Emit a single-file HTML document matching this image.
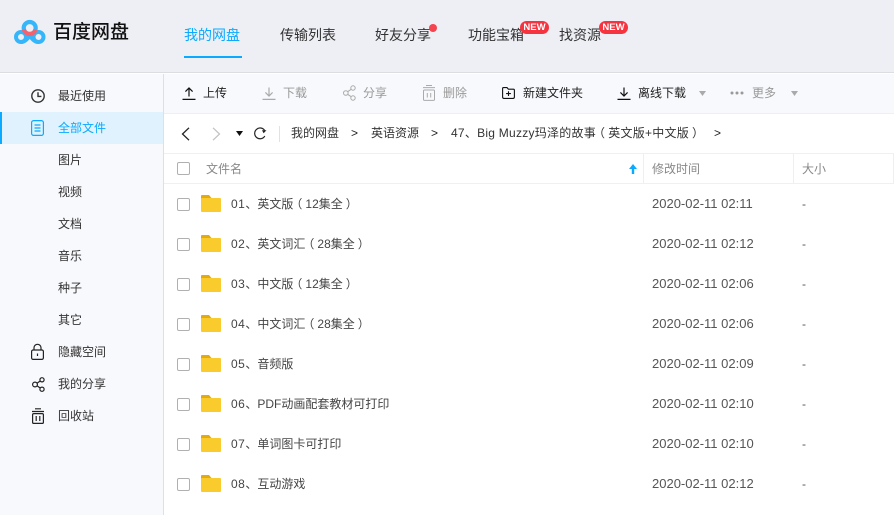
<!DOCTYPE html>
<html lang="zh"><head><meta charset="utf-8"><style>
*{margin:0;padding:0;box-sizing:border-box}
html,body{width:894px;height:515px;overflow:hidden;background:#fff}
body{position:relative;font-family:"Liberation Sans","Noto Sans CJK SC",sans-serif;font-size:12px;color:#424e67}
.t{position:absolute;white-space:nowrap;line-height:16px}
.b{position:absolute}
svg{position:absolute;overflow:visible;fill:none}
.nav{color:#333;top:26px;line-height:18px;font-size:14px}
.side{left:58px;color:#333;margin-top:-1px}
.tool{top:85px;color:#222}
.dis{color:#999}
.cb{position:absolute;left:177px;width:13px;height:13px;border:1px solid #b0b0b0;border-radius:2px;background:#fff}
.name{left:231px;color:#444;margin-top:-1px}
.date{left:652px;color:#555;font-size:13px;margin-top:-1px}
.dash{left:802px;color:#555;margin-top:-1px}
.new{position:absolute;height:13px;width:29px;border-radius:7px;background:#f5343f;color:#fff;font-size:9.5px;font-weight:bold;line-height:13px;text-align:center}
.bc{top:125px;color:#333}
.po{position:relative;left:-3px}
.pc{position:relative;left:3px}
.n{letter-spacing:.5px}
</style></head><body>
<div class="b" style="left:0;top:0;width:894px;height:73px;background:#eeeff4;border-bottom:1px solid #dcdde1"></div>
<div class="b" style="left:0;top:74px;width:164px;height:441px;background:#f8f9fc;border-right:1px solid #dfe0e4"></div>
<div class="b" style="left:164px;top:74px;width:730px;height:40px;background:#f8f9fc;border-bottom:1px solid #eeeff2"></div>

<svg style="left:14px;top:20px" width="32" height="26" viewBox="0 0 32 26">
<circle cx="7" cy="17" r="5" stroke="#35b6fb" stroke-width="4"/>
<circle cx="24.5" cy="17" r="5" stroke="#35b6fb" stroke-width="4"/>
<path d="M7 22C11 22 13 19 15.7 16C18.5 19 20.5 22 24.5 22" stroke="#35b6fb" stroke-width="4"/>
<circle cx="15.7" cy="8" r="6" stroke="#35b6fb" stroke-width="4.2"/>
<path d="M9.9 9.5A6 6 0 0 0 21.5 9.5" stroke="#f4626e" stroke-width="4.2"/>
</svg>
<div class="t" style="left:53px;top:21px;font-size:19px;line-height:24px;color:#111;font-weight:500">百度网盘</div>

<div class="t nav" style="left:184px;color:#09aaff">我的网盘</div>
<div class="b" style="left:184px;top:56px;width:58px;height:2px;background:#09aaff"></div>
<div class="t nav" style="left:280px">传输列表</div>
<div class="t nav" style="left:375px">好友分享</div>
<div class="b" style="left:429px;top:24px;width:8px;height:8px;border-radius:50%;background:#f5434f"></div>
<div class="t nav" style="left:468px">功能宝箱</div>
<div class="new" style="left:520px;top:21px">NEW</div>
<div class="t nav" style="left:559px">找资源</div>
<div class="new" style="left:599px;top:21px">NEW</div>

<div class="b" style="left:0;top:112px;width:163px;height:32px;background:#dff2fd"></div>
<div class="b" style="left:0;top:112px;width:2px;height:32px;background:#09aaff"></div>
<svg style="left:31px;top:89px" width="14" height="14" viewBox="0 0 14 14" stroke="#333" stroke-width="1.4"><circle cx="7" cy="7" r="6.2"/><path d="M7 3.2V7.4H10.4"/></svg>
<div class="t side" style="top:89px">最近使用</div>
<svg style="left:31px;top:120px" width="13" height="16" viewBox="0 0 13 16" stroke="#09aaff" stroke-width="1.2"><rect x=".6" y=".6" width="11.8" height="14.8" rx="2"/><path d="M3.5 5H9.5M3.5 8H9.5M3.5 11H9.5"/></svg>
<div class="t side" style="top:121px;color:#09aaff">全部文件</div>
<div class="t side" style="top:153px">图片</div>
<div class="t side" style="top:185px">视频</div>
<div class="t side" style="top:217px">文档</div>
<div class="t side" style="top:249px">音乐</div>
<div class="t side" style="top:281px">种子</div>
<div class="t side" style="top:313px">其它</div>
<svg style="left:31px;top:344px" width="13" height="16" viewBox="0 0 13 16" stroke="#222" stroke-width="1.2"><rect x=".6" y="6" width="11.8" height="9.4" rx="1.5"/><path d="M3 6V3.6A3.5 3.3 0 0 1 10 3.6V6M6.5 9.5V12"/></svg>
<div class="t side" style="top:345px">隐藏空间</div>
<svg style="left:32px;top:377px" width="13" height="15" viewBox="0 0 13 15" stroke="#222" stroke-width="1.2"><circle cx="3" cy="7.5" r="2.4"/><circle cx="10" cy="2.8" r="2.1"/><circle cx="10" cy="12.2" r="2.1"/><path d="M5 6.2L8.2 4M5 8.8L8.2 11"/></svg>
<div class="t side" style="top:377px">我的分享</div>
<svg style="left:32px;top:408px" width="12" height="16" viewBox="0 0 12 16" stroke="#222" stroke-width="1.2"><path d="M0 3.5H12M3 .8H9"/><rect x=".6" y="5.6" width="10.8" height="9.8" rx="1.2"/><path d="M4.2 8V13M7.8 8V13"/></svg>
<div class="t side" style="top:409px">回收站</div>

<svg style="left:182px;top:87px" width="14" height="13" viewBox="0 0 14 13" stroke="#111" stroke-width="1.2"><path d="M7 9.5V1M3.4 4.6L7 1L10.6 4.6M0.5 12.4H13.5"/></svg>
<div class="t tool" style="left:203px">上传</div>
<svg style="left:262px;top:87px" width="14" height="13" viewBox="0 0 14 13" stroke="#aaa" stroke-width="1.2"><path d="M7 .5V9M3.4 5.4L7 9L10.6 5.4M0.5 12.4H13.5"/></svg>
<div class="t tool dis" style="left:283px">下载</div>
<svg style="left:343px;top:85px" width="13" height="16" viewBox="0 0 13 16" stroke="#aaa" stroke-width="1"><circle cx="2.8" cy="8" r="2.3"/><circle cx="10" cy="3" r="2.2"/><circle cx="10" cy="13" r="2.2"/><path d="M4.8 6.6L8.2 4.3M4.8 9.4L8.2 11.7"/></svg>
<div class="t tool dis" style="left:363px">分享</div>
<svg style="left:423px;top:85px" width="12" height="16" viewBox="0 0 12 16" stroke="#aaa" stroke-width="1"><path d="M0 2.6H12M3 .5H9"/><rect x=".5" y="5" width="11" height="10.4" rx="1"/><path d="M4.3 8V12.5M7.7 8V12.5"/></svg>
<div class="t tool dis" style="left:443px">删除</div>
<svg style="left:502px;top:87px" width="13" height="12" viewBox="0 0 13 12" stroke="#111" stroke-width="1.1"><path d="M.6 10V1.6Q.6.6 1.6.6H5L6.4 2.2H11.4Q12.4 2.2 12.4 3.2V10Q12.4 11.4 11 11.4H2Q.6 11.4.6 10ZM6.5 4.2V9M4.1 6.6H8.9"/></svg>
<div class="t tool" style="left:523px">新建文件夹</div>
<svg style="left:617px;top:87px" width="14" height="13" viewBox="0 0 14 13" stroke="#111" stroke-width="1.2"><path d="M7 .5V9M3.4 5.4L7 9L10.6 5.4M0.5 12.4H13.5"/></svg>
<div class="t tool" style="left:638px">离线下载</div>
<svg style="left:699px;top:91px" width="7" height="5" viewBox="0 0 7 5"><path d="M0 0H7L3.5 5Z" fill="#aaa"/></svg>
<svg style="left:730px;top:91px" width="14" height="4" viewBox="0 0 14 4"><g fill="#999"><circle cx="2" cy="2" r="1.5"/><circle cx="7" cy="2" r="1.5"/><circle cx="12" cy="2" r="1.5"/></g></svg>
<div class="t tool dis" style="left:752px">更多</div>
<svg style="left:791px;top:91px" width="7" height="5" viewBox="0 0 7 5"><path d="M0 0H7L3.5 5Z" fill="#aaa"/></svg>

<svg style="left:181px;top:127px" width="9" height="14" viewBox="0 0 9 14" stroke="#222" stroke-width="1.3"><path d="M8 .8L1.5 7L8 13.2"/></svg>
<svg style="left:212px;top:127px" width="9" height="14" viewBox="0 0 9 14" stroke="#c4c4c4" stroke-width="1.3"><path d="M1 .8L7.5 7L1 13.2"/></svg>
<svg style="left:236px;top:131px" width="7" height="5" viewBox="0 0 7 5"><path d="M0 0H7L3.5 5Z" fill="#111"/></svg>
<svg style="left:253px;top:127px" width="14" height="13" viewBox="0 0 14 13" stroke="#222" stroke-width="1.2"><path d="M11.6 3.4A5.4 5.4 0 1 0 11.8 9"/><path d="M13.5 3.2L10.6 6.2L9 3.2Z" fill="#222" stroke="none"/></svg>
<div class="b" style="left:279px;top:126px;width:1px;height:16px;background:#e2e2e2"></div>
<div class="t bc" style="left:291px">我的网盘</div>
<div class="t bc" style="left:351px;color:#222">&gt;</div>
<div class="t bc" style="left:371px">英语资源</div>
<div class="t bc" style="left:431px;color:#222">&gt;</div>
<div class="t bc" style="left:451px;letter-spacing:.25px">47、Big Muzzy玛泽的故事<span class="po">（</span>英文版+中文版<span class="pc">）</span></div>
<div class="t bc" style="left:714px;color:#222">&gt;</div>

<div class="b" style="left:164px;top:153px;width:730px;height:1px;background:#f0f0f2"></div>
<div class="b" style="left:164px;top:183px;width:730px;height:1px;background:#f0f0f2"></div>
<div class="b" style="left:643px;top:154px;width:1px;height:29px;background:#efefef"></div>
<div class="b" style="left:793px;top:154px;width:1px;height:29px;background:#efefef"></div>
<div class="b" style="left:893px;top:154px;width:1px;height:29px;background:#efefef"></div>
<div class="cb" style="top:162px"></div>
<div class="t" style="left:206px;top:161px;color:#888">文件名</div>
<svg style="left:629px;top:164px" width="8" height="10" viewBox="0 0 8 10"><path d="M4 0L8 5H5.2V10H2.8V5H0Z" fill="#09aaff"/></svg>
<div class="t" style="left:652px;top:161px;color:#888">修改时间</div>
<div class="t" style="left:802px;top:161px;color:#888">大小</div>

<div class="cb" style="top:198px"></div><svg style="left:201px;top:195px" width="20" height="17" viewBox="0 0 20 17"><path d="M0 4V1Q0 0 1 0H8L10.5 3V4Z" fill="#e5ab0d"/><path d="M0 4Q0 3 1 3H19Q20 3 20 4V16Q20 17 19 17H1Q0 17 0 16Z" fill="#f9cb2c"/></svg>
<div class="t name" style="top:197px"><span class="n">01</span>、英文版<span class="po">（</span>12集全<span class="pc">）</span></div><div class="t date" style="top:197px">2020-02-11 02:11</div><div class="t dash" style="top:197px">-</div>

<div class="cb" style="top:238px"></div><svg style="left:201px;top:235px" width="20" height="17" viewBox="0 0 20 17"><path d="M0 4V1Q0 0 1 0H8L10.5 3V4Z" fill="#e5ab0d"/><path d="M0 4Q0 3 1 3H19Q20 3 20 4V16Q20 17 19 17H1Q0 17 0 16Z" fill="#f9cb2c"/></svg>
<div class="t name" style="top:237px"><span class="n">02</span>、英文词汇<span class="po">（</span>28集全<span class="pc">）</span></div><div class="t date" style="top:237px">2020-02-11 02:12</div><div class="t dash" style="top:237px">-</div>

<div class="cb" style="top:278px"></div><svg style="left:201px;top:275px" width="20" height="17" viewBox="0 0 20 17"><path d="M0 4V1Q0 0 1 0H8L10.5 3V4Z" fill="#e5ab0d"/><path d="M0 4Q0 3 1 3H19Q20 3 20 4V16Q20 17 19 17H1Q0 17 0 16Z" fill="#f9cb2c"/></svg>
<div class="t name" style="top:277px"><span class="n">03</span>、中文版<span class="po">（</span>12集全<span class="pc">）</span></div><div class="t date" style="top:277px">2020-02-11 02:06</div><div class="t dash" style="top:277px">-</div>

<div class="cb" style="top:318px"></div><svg style="left:201px;top:315px" width="20" height="17" viewBox="0 0 20 17"><path d="M0 4V1Q0 0 1 0H8L10.5 3V4Z" fill="#e5ab0d"/><path d="M0 4Q0 3 1 3H19Q20 3 20 4V16Q20 17 19 17H1Q0 17 0 16Z" fill="#f9cb2c"/></svg>
<div class="t name" style="top:317px"><span class="n">04</span>、中文词汇<span class="po">（</span>28集全<span class="pc">）</span></div><div class="t date" style="top:317px">2020-02-11 02:06</div><div class="t dash" style="top:317px">-</div>

<div class="cb" style="top:358px"></div><svg style="left:201px;top:355px" width="20" height="17" viewBox="0 0 20 17"><path d="M0 4V1Q0 0 1 0H8L10.5 3V4Z" fill="#e5ab0d"/><path d="M0 4Q0 3 1 3H19Q20 3 20 4V16Q20 17 19 17H1Q0 17 0 16Z" fill="#f9cb2c"/></svg>
<div class="t name" style="top:357px"><span class="n">05</span>、音频版</div><div class="t date" style="top:357px">2020-02-11 02:09</div><div class="t dash" style="top:357px">-</div>

<div class="cb" style="top:398px"></div><svg style="left:201px;top:395px" width="20" height="17" viewBox="0 0 20 17"><path d="M0 4V1Q0 0 1 0H8L10.5 3V4Z" fill="#e5ab0d"/><path d="M0 4Q0 3 1 3H19Q20 3 20 4V16Q20 17 19 17H1Q0 17 0 16Z" fill="#f9cb2c"/></svg>
<div class="t name" style="top:397px"><span class="n">06</span>、PDF动画配套教材可打印</div><div class="t date" style="top:397px">2020-02-11 02:10</div><div class="t dash" style="top:397px">-</div>

<div class="cb" style="top:438px"></div><svg style="left:201px;top:435px" width="20" height="17" viewBox="0 0 20 17"><path d="M0 4V1Q0 0 1 0H8L10.5 3V4Z" fill="#e5ab0d"/><path d="M0 4Q0 3 1 3H19Q20 3 20 4V16Q20 17 19 17H1Q0 17 0 16Z" fill="#f9cb2c"/></svg>
<div class="t name" style="top:437px"><span class="n">07</span>、单词图卡可打印</div><div class="t date" style="top:437px">2020-02-11 02:10</div><div class="t dash" style="top:437px">-</div>

<div class="cb" style="top:478px"></div><svg style="left:201px;top:475px" width="20" height="17" viewBox="0 0 20 17"><path d="M0 4V1Q0 0 1 0H8L10.5 3V4Z" fill="#e5ab0d"/><path d="M0 4Q0 3 1 3H19Q20 3 20 4V16Q20 17 19 17H1Q0 17 0 16Z" fill="#f9cb2c"/></svg>
<div class="t name" style="top:477px"><span class="n">08</span>、互动游戏</div><div class="t date" style="top:477px">2020-02-11 02:12</div><div class="t dash" style="top:477px">-</div>
</body></html>
